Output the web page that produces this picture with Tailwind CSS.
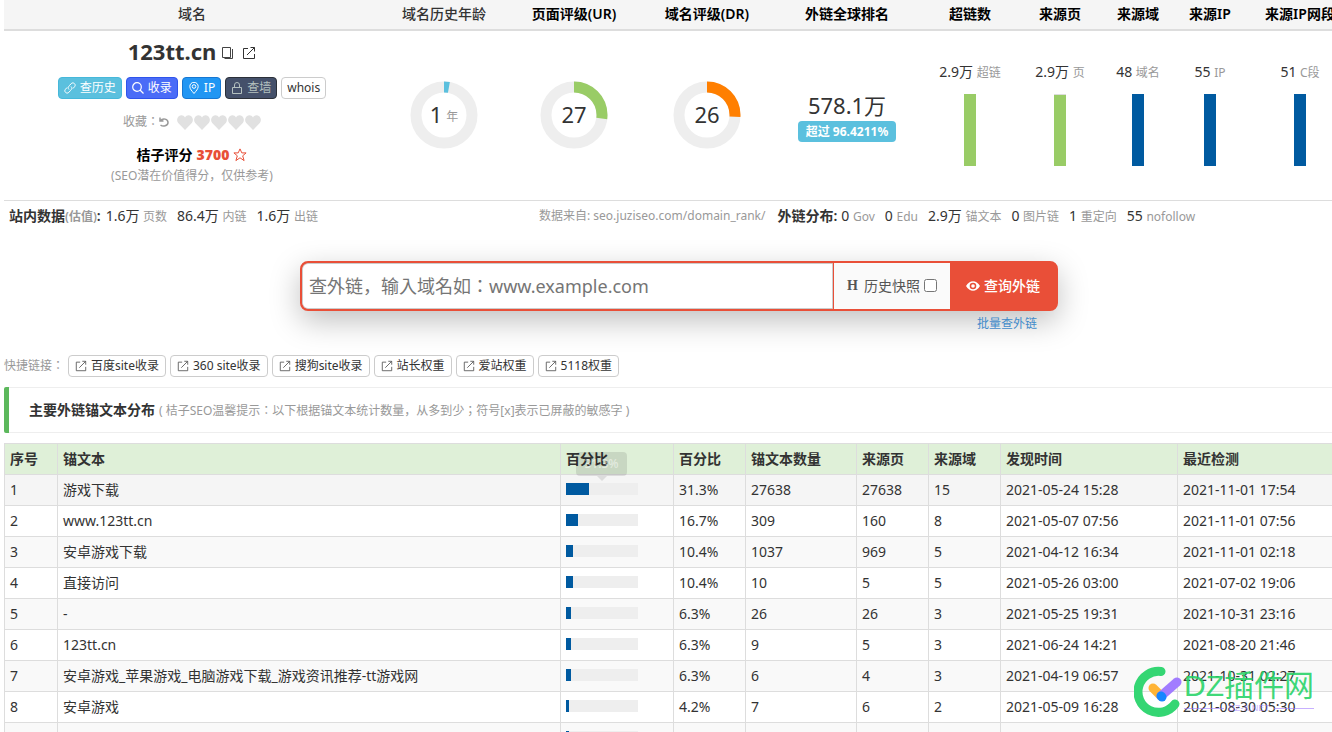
<!DOCTYPE html>
<html lang="zh-CN">
<head>
<meta charset="utf-8">
<title>123tt.cn 外链查询</title>
<script src="https://cdn.jsdelivr.net/npm/@tailwindcss/browser@4"></script>
</head>
<body class="overflow-x-hidden bg-white font-['Noto_Sans','Noto_Sans_CJK_SC',sans-serif] text-sm text-[#333]">
<svg class="hidden">
  <symbol id="share" viewBox="0 0 14 14"><path d="M6 2.500H1.500v10h11V8M8.500 1.500h4v4M12.500 1.500L5 9" fill="none" stroke="currentColor"/></symbol>
  <symbol id="heart" viewBox="0 0 16 15"><path d="M8 15L1.200 8C-.6 6 0 2.600 1.800 1.200 4-.6 6.800.2 8 2.400 9.200.2 12-.6 14.200 1.200 16 2.600 16.600 6 14.800 8z" fill="currentColor"/></symbol>
</svg>
<div class="relative h-screen overflow-hidden pl-1">

  <table class="w-full min-w-[1352px] table-fixed border-collapse text-center">
    <colgroup><col><col class="w-32"><col class="w-33"><col class="w-[134px]"><col class="w-[146px]"><col class="w-25"><col class="w-20"><col class="w-19"><col class="w-17"><col class="w-28"></colgroup>
    <thead>
      <tr class="h-[30px] border-b-2 border-[#ddd] bg-[#f5f5f5] leading-5 text-black">
        <th class="pb-0.5 font-medium text-[#333]">域名</th>
        <th class="pb-0.5 font-medium text-[#333]">域名历史年龄</th>
        <th class="pb-0.5 font-semibold">页面评级(UR)</th>
        <th class="pb-0.5 font-semibold">域名评级(DR)</th>
        <th class="pb-0.5 font-semibold">外链全球排名</th>
        <th class="pb-0.5 font-semibold">超链数</th>
        <th class="pb-0.5 font-semibold">来源页</th>
        <th class="pb-0.5 font-semibold">来源域</th>
        <th class="pb-0.5 font-semibold">来源IP</th>
        <th class="pb-0.5 font-semibold whitespace-nowrap">来源IP网段</th>
      </tr>
    </thead>
    <tbody>
      <tr class="h-[170px] border-b border-[#ddd]">
        <td class="align-top">
          <div class="flex h-9 items-center justify-center gap-2 pt-1">
            <h1 class="text-[22px] leading-8 font-bold">123tt.cn</h1>
            <svg class="mt-1 -ml-0.5 size-3" viewBox="0 0 12 12" fill="none" stroke="#444"><path d="M.5.5h8v10h-8zM2.500 11.500h8v-9.500"/></svg>
            <svg class="mt-1 size-[14px]"><use href="#share"/></svg>
          </div>
          <div class="mt-2.5 flex justify-center gap-1 text-xs leading-5 text-white">
            <button class="flex items-center gap-1 rounded-sm border border-[#46b8da] bg-[#5bc0de] px-[5px]"><svg class="size-3" viewBox="0 0 12 12" fill="none" stroke="currentColor"><path d="M5 7.500C3.500 6 4.200 5 5.500 3.500l1.700-1.900c2-2 5.200.8 3.500 2.900L9 6.500M7 4.500C8.500 6 7.800 7 6.500 8.500l-1.700 1.900c-2 2-5.200-.8-3.500-2.900L3 5.500"/></svg>查历史</button>
            <button class="flex items-center gap-1 rounded-sm border border-[#2f54eb] bg-[#4a6cf7] px-[5px]"><svg class="size-3" viewBox="0 0 12 12" fill="none" stroke="currentColor" stroke-width="1.200"><circle cx="5" cy="5" r="4.300"/><path d="M8 8l3.500 3.500"/></svg>收录</button>
            <button class="flex items-center gap-1 rounded-sm border border-[#1677d2] bg-[#2196f3] px-[5px]"><svg class="size-3" viewBox="0 0 12 12" fill="none" stroke="currentColor"><path d="M6 11.500C4 9 1.800 7 1.800 4.500a4.200 4.200 0 018.400 0C10.200 7 8 9 6 11.500z"/><circle cx="6" cy="4.500" r="1.800"/></svg>IP</button>
            <button class="flex items-center gap-1 rounded-sm border border-[#2b3038] bg-[#44506a] px-[5px] text-[#b4c1bf]"><svg class="size-3" viewBox="0 0 12 12" fill="none" stroke="currentColor"><path d="M1.500 5.500h9v6h-9zM3.500 5.500V3a2.500 2.500 0 015 0v2.500"/></svg>查墙</button>
            <button class="rounded-sm border border-[#ccc] bg-white px-[5px] text-[#333]">whois</button>
          </div>
          <div lang="ja" class="mt-[13px] flex h-5 items-center justify-center font-['Noto_Sans','Noto_Sans_CJK_JP',sans-serif] text-xs text-[#999]">收藏：<svg class="mr-2 size-[10px]" viewBox="0 0 10 10" fill="none" stroke="currentColor" stroke-width="1.500"><path d="M1 .5v3.500h3.500M1.200 4C4 .5 9 2 9 5.500S4 10 1.500 8"/></svg>
            <span class="flex gap-px text-[#e1e1e1]"><svg class="h-[15px] w-4"><use href="#heart"/></svg><svg class="h-[15px] w-4"><use href="#heart"/></svg><svg class="h-[15px] w-4"><use href="#heart"/></svg><svg class="h-[15px] w-4"><use href="#heart"/></svg><svg class="h-[15px] w-4"><use href="#heart"/></svg></span>
          </div>
          <div class="mt-[13px] flex h-5 items-center justify-center gap-1 font-semibold text-black">桔子评分 <b class="text-[#e84f38]">3700</b><svg class="size-[14px]" viewBox="0 0 14 14" fill="none" stroke="#e84f38"><path d="M7 .9l1.800 4h4.300L9.700 7.800l1.400 4.800L7 9.800l-4.100 2.800 1.400-4.800L.9 4.900h4.300z"/></svg></div>
          <div class="mt-px h-5 text-xs leading-5 text-[#999]">(SEO潜在价值得分，仅供参考)</div>
        </td>
        <td>
          <div class="relative mx-auto size-[68px]">
            <svg viewBox="0 0 68 68" fill="none" stroke-width="11"><circle cx="34" cy="34" r="28" stroke="#eee"/><circle cx="34" cy="34" r="28" pathLength="100" stroke="#5bc0de" stroke-dasharray="2.800 100" transform="rotate(-90 34 34)"/></svg>
            <div class="absolute inset-0 flex items-center justify-center gap-1 pb-0.5 text-[22px]">1<small class="pt-1.5 text-xs text-[#999]">年</small></div>
          </div>
        </td>
        <td>
          <div class="relative mx-auto size-[68px]">
            <svg viewBox="0 0 68 68" fill="none" stroke-width="11"><circle cx="34" cy="34" r="28" stroke="#eee"/><circle cx="34" cy="34" r="28" pathLength="100" stroke="#99cc66" stroke-dasharray="27 100" transform="rotate(-90 34 34)"/></svg>
            <div class="absolute inset-0 flex items-center justify-center pb-0.5 text-[22px]">27</div>
          </div>
        </td>
        <td>
          <div class="relative mx-auto size-[68px]">
            <svg viewBox="0 0 68 68" fill="none" stroke-width="11"><circle cx="34" cy="34" r="28" stroke="#eee"/><circle cx="34" cy="34" r="28" pathLength="100" stroke="#ff7f00" stroke-dasharray="26 100" transform="rotate(-90 34 34)"/></svg>
            <div class="absolute inset-0 flex items-center justify-center pb-0.5 text-[22px]">26</div>
          </div>
        </td>
        <td class="pt-0.5"><div class="pb-0.5 text-[22px] leading-7">578.1万</div><span class="inline-block rounded-sm bg-[#5bc0de] px-2 text-xs leading-[21px] font-bold text-white">超过 96.4211%</span></td>
        <td class="pb-[3px]"><div class="mb-3 leading-5">2.9万 <small class="text-xs text-[#999]">超链</small></div><div class="mx-auto h-18 w-3 bg-[#99cc66]"></div></td>
        <td class="pb-[3px]"><div class="mb-3 leading-5">2.9万 <small class="text-xs text-[#999]">页</small></div><div class="mx-auto h-18 w-3 border-t border-[#ddd] bg-[#99cc66]"></div></td>
        <td class="pb-[3px]"><div class="mb-3 leading-5">48 <small class="text-xs text-[#999]">域名</small></div><div class="mx-auto h-18 w-3 bg-[#005aa0]"></div></td>
        <td class="pb-[3px]"><div class="mb-3 leading-5">55 <small class="text-xs text-[#999]">IP</small></div><div class="mx-auto h-18 w-3 bg-[#005aa0]"></div></td>
        <td class="pb-[3px]"><div class="mb-3 leading-5">51 <small class="text-xs text-[#999]">C段</small></div><div class="mx-auto h-18 w-3 bg-[#005aa0]"></div></td>
      </tr>
    </tbody>
  </table>

  <div class="flex h-[30px] items-center pl-[5px] leading-5 whitespace-nowrap">
    <div class="flex w-[530px] items-center gap-1"><b class="mr-px font-semibold">站内数据<small class="text-xs text-[#999]">(估值)</small>:</b>
      <span class="mr-1.5">1.6万 <small class="text-xs text-[#999]">页数</small></span>
      <span class="mr-1.5">86.4万 <small class="text-xs text-[#999]">内链</small></span>
      <span>1.6万 <small class="text-xs text-[#999]">出链</small></span>
    </div>
    <div class="flex items-center gap-1"><span class="mr-2 text-xs text-[#999]">数据来自: seo.juziseo.com/domain_rank/</span>
      <b class="font-semibold">外链分布:</b>
      <span class="mr-1.5">0 <small class="text-xs text-[#999]">Gov</small></span>
      <span class="mr-1.5">0 <small class="text-xs text-[#999]">Edu</small></span>
      <span class="mr-1.5">2.9万 <small class="text-xs text-[#999]">锚文本</small></span>
      <span class="mr-1.5">0 <small class="text-xs text-[#999]">图片链</small></span>
      <span class="mr-1.5">1 <small class="text-xs text-[#999]">重定向</small></span>
      <span>55 <small class="text-xs text-[#999]">nofollow</small></span>
    </div>
  </div>

  <div class="mt-[30px] min-w-[1350px]">
  <form class="mx-auto w-[758px]">
    <div class="flex h-[50px] overflow-hidden rounded-lg border-2 border-[#e94f38] bg-[#e94f38] shadow-[0_10px_30px_rgba(0,0,0,0.25)]">
      <input lang="ja" type="text" aria-label="查外链域名" placeholder="查外链，输入域名如：www.example.com" class="min-w-0 flex-1 rounded-l-md border border-[#ccc] bg-white px-1.5 font-['Noto_Sans','Noto_Sans_CJK_JP',sans-serif] text-lg placeholder-[#757575] outline-none">
      <label class="ml-px flex w-29 items-center justify-center bg-[#fafafa] text-[#555]"><b class="mr-1.5 font-['Liberation_Serif',serif]">H</b>历史快照<input type="checkbox" class="ml-1 size-[13px]"></label>
      <button type="button" class="flex w-[106px] items-center justify-center gap-1 font-medium text-white"><svg class="h-3 w-[14px]" viewBox="0 0 14 12"><path d="M0 6C3.500-.3 10.500-.3 14 6 10.500 12.300 3.500 12.300 0 6z" fill="#fff"/><circle cx="7" cy="6" r="3.300" fill="#e94f38"/><circle cx="7" cy="6" r="1.800" fill="#fff"/></svg>查询外链</button>
    </div>
    <div class="flex justify-end pt-[3px] pr-[21px] text-xs leading-5"><a href="#" class="text-[#428bca]">批量查外链</a></div>
  </form>
  </div>

  <div class="mt-[21px] flex h-[22px] items-center gap-1 text-xs leading-5">
    <span lang="ja" class="w-15 font-['Noto_Sans','Noto_Sans_CJK_JP',sans-serif] text-[#999]">快捷链接：</span>
    <a href="#" class="flex items-center gap-1 rounded-sm border border-[#ccc] px-1.5"><svg class="size-3 text-[#555]"><use href="#share"/></svg>百度site收录</a>
    <a href="#" class="flex items-center gap-1 rounded-sm border border-[#ccc] px-1.5"><svg class="size-3 text-[#555]"><use href="#share"/></svg>360 site收录</a>
    <a href="#" class="flex items-center gap-1 rounded-sm border border-[#ccc] px-1.5"><svg class="size-3 text-[#555]"><use href="#share"/></svg>搜狗site收录</a>
    <a href="#" class="flex items-center gap-1 rounded-sm border border-[#ccc] px-1.5"><svg class="size-3 text-[#555]"><use href="#share"/></svg>站长权重</a>
    <a href="#" class="flex items-center gap-1 rounded-sm border border-[#ccc] px-1.5"><svg class="size-3 text-[#555]"><use href="#share"/></svg>爱站权重</a>
    <a href="#" class="flex items-center gap-1 rounded-sm border border-[#ccc] px-1.5"><svg class="size-3 text-[#555]"><use href="#share"/></svg>5118权重</a>
  </div>

  <div class="mt-2.5 flex rounded-l-xs bg-[#5cb85c] pl-[5px]">
    <h2 class="h-[46px] flex-1 border-y border-[#eee] bg-white pl-5 leading-[44px] font-bold">主要外链锚文本分布<small lang="ja" class="ml-1 font-['Noto_Sans','Noto_Sans_CJK_JP',sans-serif] text-xs font-normal text-[#999]">( 桔子SEO温馨提示：以下根据锚文本统计数量，从多到少；符号[x]表示已屏蔽的敏感字 )</small></h2>
  </div>

  <table class="mt-2.5 w-full min-w-[1351px] table-fixed border-collapse text-left leading-5 [&_td]:border [&_td]:border-[#ddd] [&_td]:px-[5px] [&_th]:border [&_th]:border-[#ddd] [&_th]:px-[5px] [&_th]:font-semibold [&_tr]:h-[31px]">
    <colgroup><col class="w-[53px]"><col><col class="w-[113px]"><col class="w-18"><col class="w-[111px]"><col class="w-18"><col class="w-18"><col class="w-[177px]"><col class="w-[177px]"></colgroup>
    <thead>
      <tr class="bg-[#dff0d8]"><th>序号</th><th>锚文本</th>
        <th class="relative">百分比<div class="absolute top-2 left-[15px] h-6 w-[51px] rounded-sm bg-black/10 text-center text-xs leading-6 font-medium text-white/50">31.3%<i class="absolute -bottom-[5px] left-[21px] border-x-[5px] border-t-[5px] border-x-transparent border-t-black/10"></i></div></th>
        <th>百分比</th><th>锚文本数量</th><th>来源页</th><th>来源域</th><th>发现时间</th><th>最近检测</th></tr>
    </thead>
    <tbody class="[&>tr:nth-child(odd)]:bg-[#f9f9f9]">
      <tr class="bg-[#f5f5f5]!"><td>1</td><td>游戏下载</td><td><div class="mb-0.5 h-3 w-18 bg-[#eee]"><div class="h-3 bg-[#005aa0]" style="width:31.3%"></div></div></td><td>31.3%</td><td>27638</td><td>27638</td><td>15</td><td>2021-05-24 15:28</td><td>2021-11-01 17:54</td></tr>
      <tr><td>2</td><td>www.123tt.cn</td><td><div class="mb-0.5 h-3 w-18 bg-[#eee]"><div class="h-3 bg-[#005aa0]" style="width:16.7%"></div></div></td><td>16.7%</td><td>309</td><td>160</td><td>8</td><td>2021-05-07 07:56</td><td>2021-11-01 07:56</td></tr>
      <tr><td>3</td><td>安卓游戏下载</td><td><div class="mb-0.5 h-3 w-18 bg-[#eee]"><div class="h-3 bg-[#005aa0]" style="width:10.4%"></div></div></td><td>10.4%</td><td>1037</td><td>969</td><td>5</td><td>2021-04-12 16:34</td><td>2021-11-01 02:18</td></tr>
      <tr><td>4</td><td>直接访问</td><td><div class="mb-0.5 h-3 w-18 bg-[#eee]"><div class="h-3 bg-[#005aa0]" style="width:10.4%"></div></div></td><td>10.4%</td><td>10</td><td>5</td><td>5</td><td>2021-05-26 03:00</td><td>2021-07-02 19:06</td></tr>
      <tr><td>5</td><td>-</td><td><div class="mb-0.5 h-3 w-18 bg-[#eee]"><div class="h-3 bg-[#005aa0]" style="width:6.3%"></div></div></td><td>6.3%</td><td>26</td><td>26</td><td>3</td><td>2021-05-25 19:31</td><td>2021-10-31 23:16</td></tr>
      <tr><td>6</td><td>123tt.cn</td><td><div class="mb-0.5 h-3 w-18 bg-[#eee]"><div class="h-3 bg-[#005aa0]" style="width:6.3%"></div></div></td><td>6.3%</td><td>9</td><td>5</td><td>3</td><td>2021-06-24 14:21</td><td>2021-08-20 21:46</td></tr>
      <tr><td>7</td><td>安卓游戏_苹果游戏_电脑游戏下载_游戏资讯推荐-tt游戏网</td><td><div class="mb-0.5 h-3 w-18 bg-[#eee]"><div class="h-3 bg-[#005aa0]" style="width:6.3%"></div></div></td><td>6.3%</td><td>6</td><td>4</td><td>3</td><td>2021-04-19 06:57</td><td>2021-10-31 02:27</td></tr>
      <tr><td>8</td><td>安卓游戏</td><td><div class="mb-0.5 h-3 w-18 bg-[#eee]"><div class="h-3 bg-[#005aa0]" style="width:4.2%"></div></div></td><td>4.2%</td><td>7</td><td>6</td><td>2</td><td>2021-05-09 16:28</td><td>2021-08-30 05:30</td></tr>
      <tr><td></td><td></td><td><div class="mb-0.5 h-3 w-18 bg-[#eee]"><div class="h-3 bg-[#005aa0]" style="width:4.2%"></div></div></td><td></td><td></td><td></td><td></td><td></td><td></td></tr>
    </tbody>
  </table>

  <div class="absolute right-[18px] bottom-3.5 flex items-start gap-0.5 text-[#25d366]/90">
    <svg class="h-[52px] w-12" viewBox="0 0 48 52" fill="none" stroke-linecap="round"><path d="M27 5.500A20.500 20.500 0 1041 38" stroke="#34d673" stroke-width="9"/><path d="M19 22l8 8" stroke="#ffb436" stroke-width="9"/><path d="M27 30l16-14" stroke="#a17cff" stroke-width="9"/><path d="M27 30l1 1" stroke="#1686ff" stroke-width="9"/></svg>
    <div class="relative pt-0.5 font-['Liberation_Sans','Noto_Sans_CJK_SC',sans-serif] text-[30px] leading-9">DZ插件网<div class="absolute top-9 left-0 flex w-full items-center gap-1 text-[9px] leading-3 text-[#a17cff]/60"><i class="h-px flex-1 bg-[#a17cff]/60"></i>DZ-X.NET<i class="h-px flex-1 bg-[#a17cff]/60"></i></div></div>
  </div>
</div>
</body>
</html>
